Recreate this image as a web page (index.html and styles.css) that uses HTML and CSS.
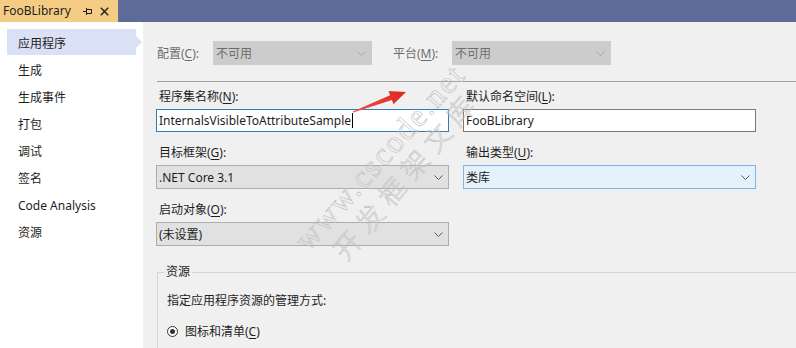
FILE: index.html
```
<!DOCTYPE html>
<html lang="zh-CN">
<head>
<meta charset="utf-8">
<title>FooBLibrary</title>
<link rel="stylesheet" href="styles.css">
</head>
<body>
<div class="page">
  <div class="tabbar">
    <div class="tab">
      <span class="tab-title">FooBLibrary</span>
      <svg class="pin" width="9" height="9" viewBox="0 0 9 9"><path d="M0 4.5H3M3.5 1V8M3.5 2.5H8.5V6.5H3.5" fill="none" stroke="#1e1e1e" stroke-width="1"/></svg>
      <svg class="close" width="9" height="9" viewBox="0 0 9 9"><path d="M0.8 0.8L8.2 8.2M8.2 0.8L0.8 8.2" fill="none" stroke="#1e1e1e" stroke-width="1.4"/></svg>
    </div>
  </div>
  <div class="main">
    <nav class="side">
      <div class="nav-item selected">应用程序</div>
      <div class="nav-item">生成</div>
      <div class="nav-item">生成事件</div>
      <div class="nav-item">打包</div>
      <div class="nav-item">调试</div>
      <div class="nav-item">签名</div>
      <div class="nav-item">Code Analysis</div>
      <div class="nav-item">资源</div>
    </nav>
    <section class="content">
      <div class="toprow">
        <span class="tlabel tlabel-1">配置(<u>C</u>):</span>
        <div class="combo disabled small"><span>不可用</span><svg class="chev" width="9" height="5" viewBox="0 0 9 5"><path d="M0.5 0.5L4.5 4.5L8.5 0.5" fill="none" stroke="currentColor"/></svg></div>
        <span class="tlabel tlabel-2">平台(<u>M</u>):</span>
        <div class="combo disabled small"><span>不可用</span><svg class="chev" width="9" height="5" viewBox="0 0 9 5"><path d="M0.5 0.5L4.5 4.5L8.5 0.5" fill="none" stroke="currentColor"/></svg></div>
      </div>
      <div class="sep"></div>
      <div class="grid">
        <div class="field">
          <div class="flabel">程序集名称(<u>N</u>):</div>
          <div class="input focused"><span>InternalsVisibleToAttributeSample</span><span class="caret"></span></div>
        </div>
        <div class="field">
          <div class="flabel">默认命名空间(<u>L</u>):</div>
          <div class="input"><span>FooBLibrary</span></div>
        </div>
        <div class="field">
          <div class="flabel">目标框架(<u>G</u>):</div>
          <div class="combo"><span>.NET Core 3.1</span><svg class="chev" width="9" height="5" viewBox="0 0 9 5"><path d="M0.5 0.5L4.5 4.5L8.5 0.5" fill="none" stroke="currentColor"/></svg></div>
        </div>
        <div class="field">
          <div class="flabel">输出类型(<u>U</u>):</div>
          <div class="combo hover"><span>类库</span><svg class="chev" width="9" height="5" viewBox="0 0 9 5"><path d="M0.5 0.5L4.5 4.5L8.5 0.5" fill="none" stroke="currentColor"/></svg></div>
        </div>
        <div class="field">
          <div class="flabel">启动对象(<u>O</u>):</div>
          <div class="combo"><span>(未设置)</span><svg class="chev" width="9" height="5" viewBox="0 0 9 5"><path d="M0.5 0.5L4.5 4.5L8.5 0.5" fill="none" stroke="currentColor"/></svg></div>
        </div>
      </div>
      <fieldset class="group">
        <legend>资源</legend>
        <div class="group-desc">指定应用程序资源的管理方式:</div>
        <div class="radio-row"><span class="radio"><span class="dot"></span></span><span>图标和清单(<u>C</u>)</span></div>
      </fieldset>
    </section>
  </div>

  <div class="watermark wm-url">www.cscode.net</div>
  <div class="watermark wm-cn">开发框架文库</div>
  <svg class="arrow" width="796" height="348" viewBox="0 0 796 348">
    <defs>
      <linearGradient id="ag" x1="352" y1="112" x2="406" y2="92" gradientUnits="userSpaceOnUse">
        <stop offset="0" stop-color="#f0524a"/>
        <stop offset="1" stop-color="#e0261e"/>
      </linearGradient>
    </defs>
    <polygon fill="url(#ag)" points="352.8,111.5 390.1,95.3 388.5,91.0 406,92 393.5,104.2 391.9,99.9 353.2,112.6"/>
  </svg>
</div>
</body>
</html>
```
FILE: styles.css
```
html, body {
  margin: 0;
  padding: 0;
}
body {
  width: 796px;
  height: 348px;
  overflow: hidden;
  font-family: "Noto Sans", "Noto Sans CJK SC", sans-serif;
  font-size: 12px;
  color: #1e1e1e;
}
u {
  text-decoration: underline;
  text-underline-offset: 2px;
}
.page {
  position: relative;
  width: 796px;
  height: 348px;
  overflow: hidden;
  background: #f0f0f0;
}
.tabbar {
  height: 22px;
  background: #5d6b99;
  display: flex;
}
.tab {
  width: 118px;
  background: #f5cc84;
  display: flex;
  align-items: center;
  padding-left: 3px;
  box-sizing: border-box;
}
.tab-title {
  font-size: 12px;
  line-height: 16px;
}
.pin {
  margin-left: 12px;
}
.close {
  margin-left: 8px;
}
.main {
  display: flex;
  height: 326px;
}
.side {
  width: 143px;
  background: #ffffff;
  padding-top: 7px;
  box-sizing: border-box;
  flex: none;
}
.nav-item {
  position: relative;
  height: 26px;
  line-height: 29px;
  margin: 0 7px 1px 7px;
  padding-left: 11px;
}
.nav-item.selected {
  background: #dae0f6;
}
.nav-item.selected::after {
  content: "";
  position: absolute;
  right: -6px;
  top: 7px;
  border-left: 6px solid #dae0f6;
  border-top: 6px solid transparent;
  border-bottom: 6px solid transparent;
}
.content {
  flex: 1;
  background: #f0f0f0;
  padding: 19px 0 0 13px;
  box-sizing: border-box;
}
.toprow {
  display: flex;
  align-items: center;
  height: 24px;
}
.tlabel {
  color: #6d6d6d;
  flex: none;
}
.tlabel-1 {
  margin-left: 1px;
  width: 56px;
}
.tlabel-2 {
  margin-left: 21px;
  width: 59px;
}
.combo {
  height: 24px;
  box-sizing: border-box;
  border: 1px solid #adadad;
  background: #e1e1e1;
  display: flex;
  align-items: center;
  justify-content: space-between;
  padding: 0 5px 0 2px;
  color: #1e1e1e;
}
.combo .chev {
  color: #5a5a5a;
}
.combo.small {
  width: 159px;
}
.combo.disabled {
  background: #cccccc;
  border-color: #cccccc;
  color: #6d6d6d;
}
.combo.disabled .chev {
  color: #a8a8a8;
}
.combo.hover {
  background: #e5f1fb;
  border-color: #7eb4ea;
}
.sep {
  height: 1px;
  background: #a0a0a0;
  margin-top: 16px;
  margin-left: 1px;
}
.grid {
  display: grid;
  grid-template-columns: 293px 293px;
  column-gap: 14px;
  row-gap: 13px;
  margin-top: 7px;
}
.flabel {
  height: 16px;
  line-height: 16px;
  margin: 0 0 4px 3px;
}
.input {
  height: 23px;
  box-sizing: border-box;
  border: 1px solid #7a7a7a;
  background: #ffffff;
  display: flex;
  align-items: center;
  padding-left: 2px;
}
.input.focused {
  border-color: #2f7fc0;
}
.caret {
  width: 1px;
  height: 15px;
  background: #000000;
  margin-left: 1px;
}
.group {
  margin: 18px -4px 0 1px;
  padding: 0 0 20px 6px;
  border: 1px solid #d5d5d5;
  border-right: none;
  border-bottom: none;
  min-width: 0;
}
.group legend {
  padding: 0 2px;
  line-height: 16px;
}
.group-desc {
  margin: 13px 0 0 3px;
  line-height: 16px;
}
.radio-row {
  display: flex;
  align-items: center;
  margin: 14px 0 0 3px;
  height: 16px;
}
.radio {
  width: 11px;
  height: 11px;
  box-sizing: border-box;
  border: 1px solid #333333;
  border-radius: 50%;
  background: #ffffff;
  display: flex;
  align-items: center;
  justify-content: center;
  margin-right: 7px;
}
.dot {
  width: 5px;
  height: 5px;
  border-radius: 50%;
  background: #333333;
}
.watermark {
  position: absolute;
  white-space: nowrap;
  color: transparent;
  -webkit-text-stroke: 0.6px #c2c2c2;
  transform-origin: 0 50%;
  pointer-events: none;
}
.wm-url {
  left: 300px;
  top: 230px;
  font-family: "Liberation Serif", serif;
  font-size: 32px;
  line-height: 30px;
  letter-spacing: 2px;
  transform: rotate(-48deg);
}
.wm-cn {
  left: 338px;
  top: 240px;
  font-family: "Noto Sans CJK SC", sans-serif;
  font-weight: 300;
  font-size: 27px;
  line-height: 30px;
  letter-spacing: 8px;
  transform: rotate(-50deg);
}
.arrow {
  position: absolute;
  left: 0;
  top: 0;
  pointer-events: none;
}
```
